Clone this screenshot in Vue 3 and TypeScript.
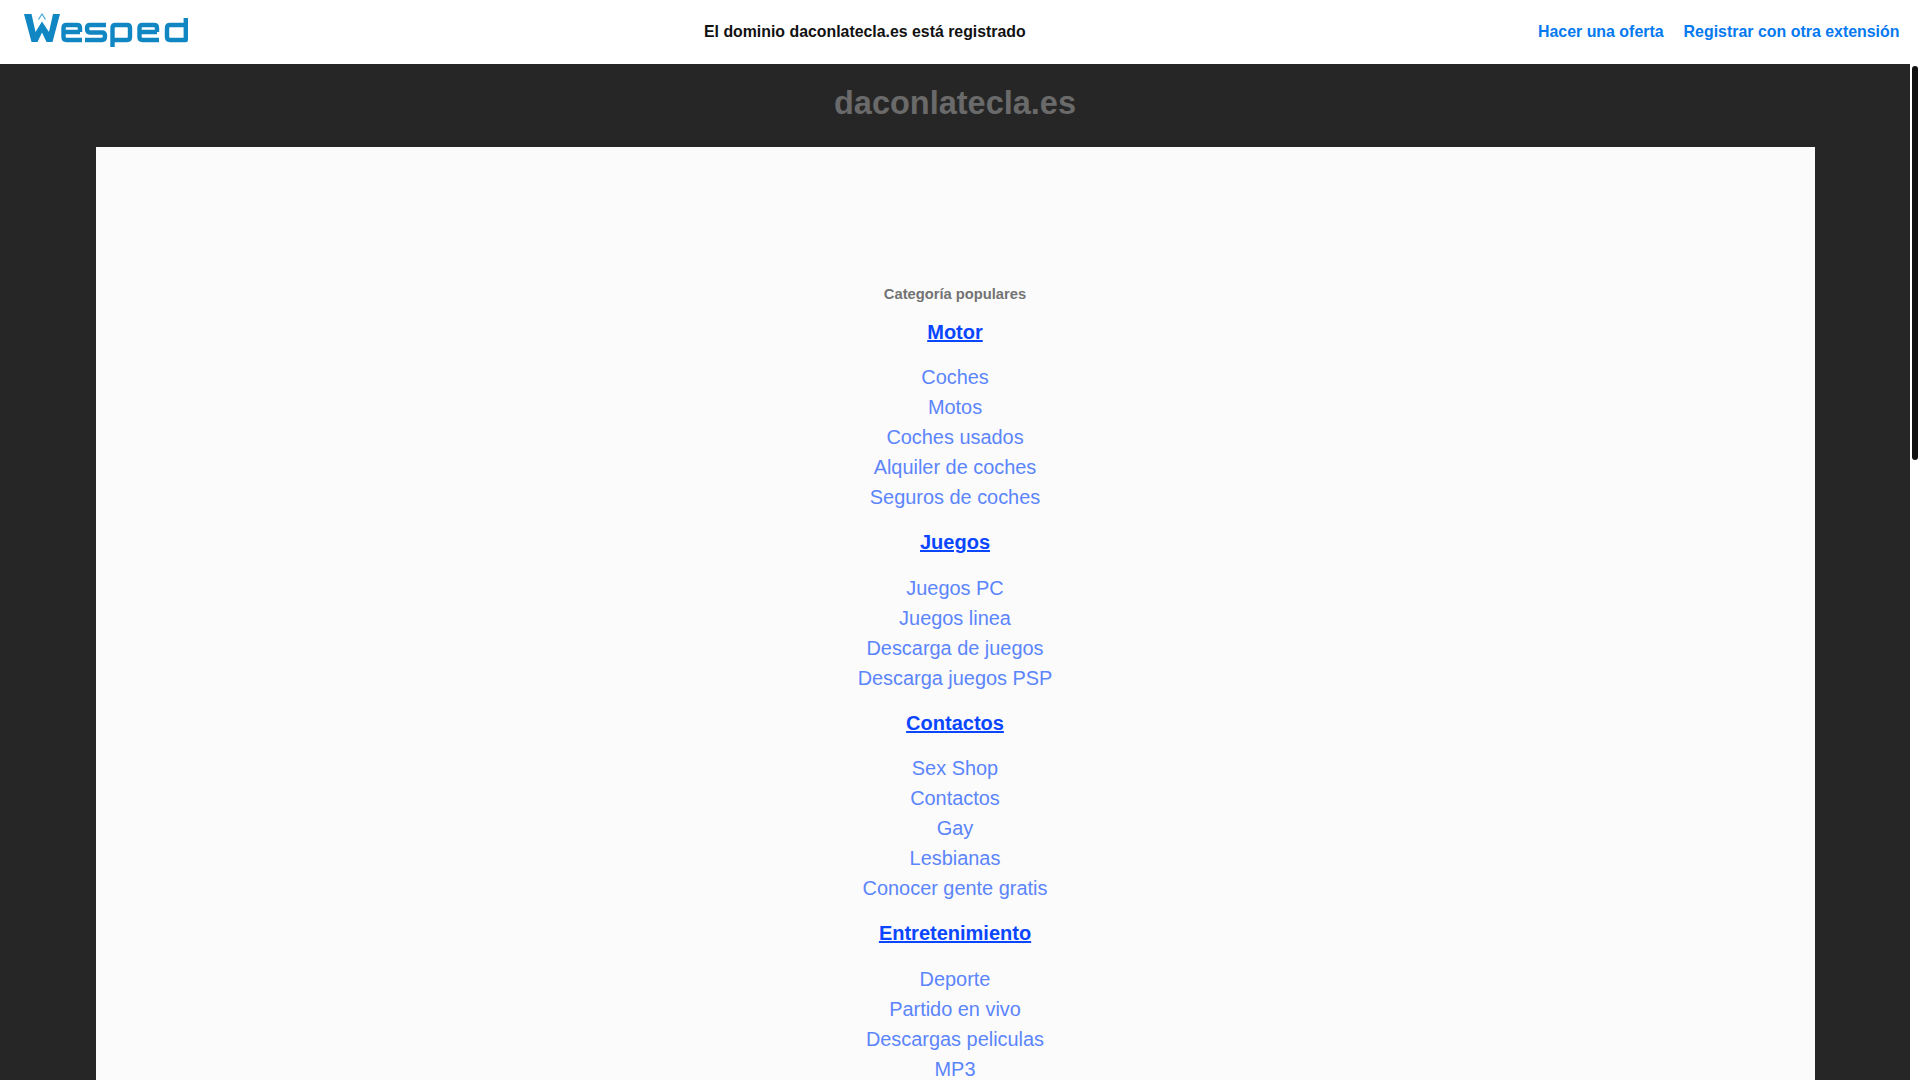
<script setup lang="ts">
interface Group { title: string; links: string[] }
const groups: Group[] = [
  { title: 'Motor', links: ['Coches', 'Motos', 'Coches usados', 'Alquiler de coches', 'Seguros de coches'] },
  { title: 'Juegos', links: ['Juegos PC', 'Juegos linea', 'Descarga de juegos', 'Descarga juegos PSP'] },
  { title: 'Contactos', links: ['Sex Shop', 'Contactos', 'Gay', 'Lesbianas', 'Conocer gente gratis'] },
  { title: 'Entretenimiento', links: ['Deporte', 'Partido en vivo', 'Descargas peliculas', 'MP3'] },
]
</script>

<template>
  <div class="page">
    <header class="topbar">
      <a class="logo" href="#" aria-label="Wesped">
        <svg width="168" height="38" viewBox="0 0 168 38" fill="none" stroke="#1086c2" stroke-width="4.4" stroke-linejoin="round" stroke-linecap="butt">
          <path d="M2 1 H9.5 L13.5 19 L20 8.5 L27 19 L31 1 H38 L30.5 29 H24.5 L20 19.5 L15.5 29 H9.5 Z" fill="#1086c2" stroke="none" />
          <path d="M16.5 6.5 L20 1 L23.5 6.5" stroke-width="1.3" stroke="#4aa9d8" />
          <path d="M58 19 H41.5 V15 Q41.5 12 44.5 12 H55 Q58 12 58 15 V19 M41.5 19 V24 Q41.5 27 44.5 27 H60" />
          <path d="M84 12 H68 Q65 12 65 15.5 Q65 19.5 68 19.5 H80 Q83 19.5 83 23 Q83 27 80 27 H63" />
          <path d="M90.5 34 V15 Q90.5 12 93.5 12 H105 Q108 12 108 15 V24 Q108 27 105 27 H90.5" />
          <path d="M135 19 H117.5 V15 Q117.5 12 120.5 12 H132 Q135 12 135 15 V19 M117.5 19 V24 Q117.5 27 120.5 27 H137" />
          <path d="M163.8 5 V27 H148 Q145 27 145 24 V15 Q145 12 148 12 H163.8" />
        </svg>
      </a>
      <p class="notice">El dominio daconlatecla.es está registrado</p>
      <nav class="actions">
        <a href="#">Hacer una oferta</a>
        <a href="#">Registrar con otra extensión</a>
      </nav>
    </header>

    <div class="viewport">
      <main class="content">
        <h1 class="domain">daconlatecla.es</h1>
        <section class="card">
          <h2 class="popular">Categoría populares</h2>
          <div v-for="g in groups" :key="g.title" class="group">
            <a class="group-title" href="#">{{ g.title }}</a>
            <ul class="links">
              <li v-for="l in g.links" :key="l"><a href="#">{{ l }}</a></li>
            </ul>
          </div>
        </section>
      </main>
      <div class="scrollbar"><div class="thumb"></div></div>
    </div>
  </div>
</template>

<style>
html, body { margin: 0; height: 100%; overflow: hidden; background: #fff; }
</style>

<style scoped>
.page {
  height: 1080px;
  display: flex;
  flex-direction: column;
  font-family: "Liberation Sans", Arial, sans-serif;
  overflow: hidden;
}
.topbar {
  height: 64px;
  flex: none;
  display: flex;
  align-items: center;
  background: #fff;
  padding: 0 20.5px 0 22px;
}
.logo { display: flex; width: 168px; }
.notice {
  margin: 0 0 0 514px;
  font-size: 15.86px;
  font-weight: 700;
  color: #111;
}
.actions { margin-left: auto; display: flex; gap: 20px; }
.actions a { color: #0579f0; font-size: 15.93px; font-weight: 700; text-decoration: none; }
.viewport { flex: 1; display: flex; min-height: 0; }
.content {
  width: 1910px;
  flex: none;
  background: #262626;
  padding: 0 95px 0 96px;
  box-sizing: border-box;
  overflow: hidden;
}
.domain {
  margin: 0;
  height: 83px;
  padding-right: 1px;
  line-height: 78px;
  text-align: center;
  font-size: 32.5px;
  font-weight: 700;
  color: #6a6a6a;
}
.card {
  background: #fbfbfb;
  padding: 137px 1px 0 0;
  text-align: center;
}
.popular {
  margin: 0 0 13px;
  font-size: 14.72px;
  line-height: 20px;
  font-weight: 700;
  color: #737373;
}
.group { margin-bottom: 15px; }
.group-title {
  display: block;
  width: fit-content;
  margin: 0 auto 15.4px;
  font-size: 20px;
  line-height: 30px;
  font-weight: 700;
  color: #0a46ff;
  text-decoration: underline;
}
.links { list-style: none; margin: 0; padding: 0; }
.links li { line-height: 30px; font-size: 19.92px; }
.links a { color: #5b85fb; text-decoration: none; }
.scrollbar { flex: 1; background: #fff; position: relative; }
.thumb {
  position: absolute;
  top: 2px;
  left: 2px;
  width: 6px;
  height: 394px;
  background: #111;
  border-radius: 3px;
}
</style>
